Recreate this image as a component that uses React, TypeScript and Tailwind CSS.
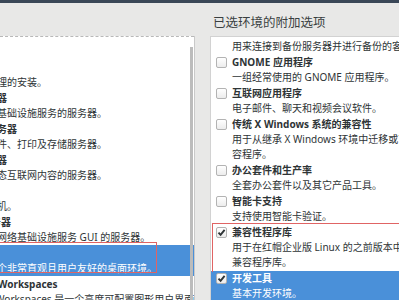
import React from "react";

type Env = { title: string; desc: string };
type AddOn = { title: string; lines: string[]; checked?: boolean; selected?: boolean };

const envs: Env[] = [
  { title: "最小安装", desc: "基本功能。" },
  { title: "计算节点", desc: "执行计算及处理的安装。" },
  { title: "基础设施服务器", desc: "用于操作网络基础设施服务的服务器。" },
  { title: "文件及打印服务器", desc: "用于企业的文件、打印及存储服务器。" },
  { title: "基本网页服务器", desc: "提供静态及动态互联网内容的服务器。" },
  { title: "虚拟化主机", desc: "最小虚拟化主机。" },
  { title: "带 GUI 的服务器", desc: "带有用于操作网络基础设施服务 GUI 的服务器。" },
  { title: "GNOME 桌面", desc: "GNOME 是一个非常直观且用户友好的桌面环境。" },
  { title: "KDE Plasma Workspaces", desc: "KDE Plasma Workspaces 是一个高度可配置图形用户界面，其中包括面板、桌面、系统图标以及桌面向导。" },
];

const addOns: AddOn[] = [
  { title: "备份客户端", lines: ["用来连接到备份服务器并进行备份的客户端。"] },
  { title: "GNOME 应用程序", lines: ["一组经常使用的 GNOME 应用程序。"] },
  { title: "互联网应用程序", lines: ["电子邮件、聊天和视频会议软件。"] },
  { title: "传统 X Windows 系统的兼容性", lines: ["用于从继承 X Windows 环境中迁移或可作为兼", "容程序。"] },
  { title: "办公套件和生产率", lines: ["全套办公套件以及其它产品工具。"] },
  { title: "智能卡支持", lines: ["支持使用智能卡验证。"] },
  { title: "兼容性程序库", lines: ["用于在红帽企业版 Linux 的之前版本中构建的应用程序的", "兼容程序库。"], checked: true },
  { title: "开发工具", lines: ["基本开发环境。"], checked: true, selected: true },
];

function CheckBox({ checked }: { checked?: boolean }) {
  return (
    <div className="flex h-[11px] w-[11px] items-center justify-center rounded-[2px] border border-[#b3b3b3] bg-gradient-to-b from-white to-[#ececec]">
      {checked && (
        <svg width="9" height="9" viewBox="0 0 9 9" aria-hidden>
          <path d="M1.5 4.6 L3.6 6.8 L7.6 1.8" fill="none" stroke="#2e3436" strokeWidth="1.9" />
        </svg>
      )}
    </div>
  );
}

export default function App() {
  return (
    <div className="flex h-[300px] w-[399px] flex-col overflow-hidden bg-[#e8e8e7] font-['Noto_Sans','Noto_Sans_CJK_SC',sans-serif] text-[#2e3436]">
      <div className="h-[3px] bg-[#3a4757]" />

      <div className="flex min-h-0 flex-1">
        {/* base environments, scrolled */}
        <div className="flex w-[195px] flex-col">
          <div className="h-[33px]" />
          <div className="relative flex-1 overflow-hidden border-r border-[#c9c9c9] bg-white">
            <div className="h-full overflow-hidden border-t border-dashed border-[#b8b8b8]">
              <div className="ml-[-63px] mt-[-9px] text-[10px] leading-[15px]">
                {envs.map((e) => (
                  <div
                    key={e.title}
                    className={`h-[31px] whitespace-nowrap pt-px ${e.title === "GNOME 桌面" ? "bg-[#4a90d9] text-white" : ""}`}
                  >
                    <div className="font-bold">{e.title}</div>
                    <div>{e.desc}</div>
                  </div>
                ))}
              </div>
            </div>
            <div className="absolute bottom-0 right-[1px] top-[11px] w-[3px] bg-[#bcbcbc]" />
            <div className="absolute left-[-10px] top-[206px] h-[31px] w-[167px] border border-[#e06464]" />
          </div>
        </div>

        {/* add-ons */}
        <div className="ml-[15px] flex flex-1 flex-col">
          <div className="h-[33px] pl-[3px] pt-[11px] text-[12.5px] leading-[18px] text-[#3a3f41]">
            已选环境的附加选项
          </div>
          <div className="relative flex-1 overflow-hidden border-l border-t border-[#d2d2d2] bg-white">
            <div className="mt-[-13px] flex flex-col gap-px text-[10px] leading-[15px]">
              {addOns.map((a) => (
                <div
                  key={a.title}
                  className={`flex whitespace-nowrap pl-[5px] ${a.selected ? "bg-[#4a90d9] text-white" : ""}`}
                >
                  <div className="flex h-[15px] w-[11px] items-center">
                    <CheckBox checked={a.checked} />
                  </div>
                  <div className="ml-[5px]">
                    <div className="font-bold">{a.title}</div>
                    {a.lines.map((l) => (
                      <div key={l}>{l}</div>
                    ))}
                  </div>
                </div>
              ))}
            </div>
            <div className="absolute left-px right-0 top-[186px] h-[49px] border-l border-t border-[#e06464]" />
          </div>
        </div>
      </div>
    </div>
  );
}
